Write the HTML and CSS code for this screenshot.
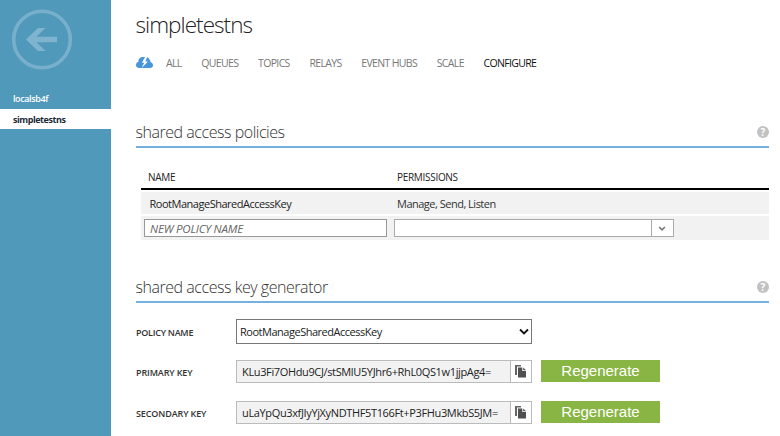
FILE: index.html
```html
<!DOCTYPE html>
<html lang="en">
<head>
<meta charset="utf-8">
<title>simpletestns</title>
<link rel="stylesheet" href="styles.css">
</head>
<body>
<div class="app">
  <aside class="sidebar">
    <svg class="back" width="62" height="62" viewBox="0 0 62 62">
      <circle cx="31" cy="31.5" r="28.3" fill="none" stroke="#78b0cb" stroke-width="3.6"/>
      <path d="M15 31.5 L27 20 H34.5 L25.5 28.8 H46 V34.2 H25.5 L34.5 43 H27 Z" fill="#7fb4ce"/>
    </svg>
    <nav class="namespaces">
      <a class="ns">localsb4f</a>
      <a class="ns current">simpletestns</a>
    </nav>
  </aside>
  <main class="content">
    <h1 class="title">simpletestns</h1>
    <nav class="tabs">
      <svg class="cloud" width="17" height="12" viewBox="0 0 17 12">
        <path d="M3.4 11 C1.2 11 0 9.8 0 8 C0 6.3 1.2 5.2 2.4 5.1 C2.2 2.3 4 0 7 0 H10 C11.5 0 12.8 .8 13.2 2.2 C14.2 3 14.6 4 14.5 5.2 C16 5.5 17 6.6 17 8.2 C17 9.9 15.8 11 14 11 Z" fill="#4796da"/>
        <path d="M9 0 L6 5.7 H8.2 L5.6 11 L12 4.4 H9.4 L11.2 0 Z" fill="#fff"/>
      </svg>
      <a class="tab all">ALL</a>
      <a class="tab">QUEUES</a>
      <a class="tab">TOPICS</a>
      <a class="tab">RELAYS</a>
      <a class="tab">EVENT HUBS</a>
      <a class="tab">SCALE</a>
      <a class="tab active">CONFIGURE</a>
    </nav>

    <section class="policies">
      <header class="section-head">
        <h2>shared access policies</h2>
        <span class="help">?</span>
      </header>
      <div class="table">
        <div class="row head"><span>NAME</span><span class="perm">PERMISSIONS</span></div>
        <div class="row"><span class="name">RootManageSharedAccessKey</span><span class="perm">Manage, Send, Listen</span></div>
        <div class="row entry">
          <div class="new-name">NEW POLICY NAME</div>
          <div class="combo">
            <svg width="22" height="16" viewBox="0 0 22 16"><path d="M7.5 7 L10.5 10 L13.5 7" fill="none" stroke="#777" stroke-width="1.7"/></svg>
          </div>
        </div>
      </div>
    </section>

    <section class="generator">
      <header class="section-head">
        <h2>shared access key generator</h2>
        <span class="help">?</span>
      </header>
      <div class="field select-field">
        <label class="tight">POLICY NAME</label>
        <div class="select">
          <span>RootManageSharedAccessKey</span>
          <svg width="12" height="8" viewBox="0 0 12 8"><path d="M2 1.5 L6 5.5 L10 1.5" fill="none" stroke="#111" stroke-width="1.8"/></svg>
        </div>
      </div>
      <div class="field key-field">
        <label>PRIMARY KEY</label>
        <div class="key">
          <span>KLu3Fi7OHdu9CJ/stSMlU5YJhr6+RhL0QS1w1jjpAg4=</span>
          <div class="copy"><svg width="12" height="13" viewBox="0 0 12 13"><path d="M0 0 H6 V1.5 H2 V10 H0 Z" fill="#666"/><path d="M3 2.5 H7.3 V6 H11 V12.5 H3 Z M8.2 2.5 L11 5.2 H8.2 Z" fill="#505050"/></svg></div>
        </div>
        <div class="button">Regenerate</div>
      </div>
      <div class="field key-field">
        <label>SECONDARY KEY</label>
        <div class="key">
          <span>uLaYpQu3xfJIyYjXyNDTHF5T166Ft+P3FHu3MkbS5JM=</span>
          <div class="copy"><svg width="12" height="13" viewBox="0 0 12 13"><path d="M0 0 H6 V1.5 H2 V10 H0 Z" fill="#666"/><path d="M3 2.5 H7.3 V6 H11 V12.5 H3 Z M8.2 2.5 L11 5.2 H8.2 Z" fill="#505050"/></svg></div>
        </div>
        <div class="button">Regenerate</div>
      </div>
    </section>
  </main>
</div>
</body>
</html>
```
FILE: styles.css
```css
* { box-sizing: border-box; }
body { margin: 0; background: #fff; font-family: "Open Sans", "Noto Sans", sans-serif; font-size: 11px; color: #333; overflow: hidden; }
.app { display: flex; height: 436px; white-space: nowrap; }
.sidebar { width: 111px; flex: none; background: #5099bb; padding-top: 8px; }
.back { display: block; margin-left: 11px; }
.namespaces { margin-top: 18px; }
.ns { display: block; height: 21px; line-height: 22px; padding-left: 13px; font-size: 9px; font-weight: 600; color: #fff; letter-spacing: -0.4px; }
.ns.current { height: 20px; background: #fff; color: #1c2b38; font-weight: 700; letter-spacing: -0.45px; }
.content { flex: 1; padding: 0 11px 0 25px; }
h1, h2 { margin: 0; font-weight: 300; }
.title { height: 50px; line-height: 49px; font-size: 22.5px; letter-spacing: -0.95px; color: #222; margin-left: -0.5px; }
.tabs { display: flex; align-items: center; gap: 19.7px; height: 26px; font-size: 10.5px; color: #777; }
.cloud { margin-top: -1px; }
.tab { letter-spacing: -0.65px; }
.all { margin-left: -6.7px; }
.active { color: #111; }
.section-head { display: flex; justify-content: space-between; align-items: center; height: 30px; border-bottom: 2px solid #76b0e0; }
h2 { font-size: 16px; color: #333; letter-spacing: -0.46px; margin-left: -0.5px; }
.help { width: 12px; height: 12px; border-radius: 50%; background: #c2c2c2; color: #fff; font-size: 10px; font-weight: 700; line-height: 12px; text-align: center; }
.policies { margin-top: 42px; }
.table { padding-left: 5px; margin-top: 17px; }
.row { display: grid; grid-template-columns: 253px 1fr; align-items: center; height: 22px; margin-bottom: 2px; padding-left: 3px; background: #f2f2f2; }
.row.head { height: 25px; background: #fff; border-bottom: 2px solid #000; font-size: 10px; color: #222; padding-left: 7px; grid-template-columns: 249px 1fr; letter-spacing: -0.3px; }
.name { padding-left: 5.5px; color: #222; letter-spacing: -0.48px; }
.row .perm { letter-spacing: -0.5px; }
.row.head .perm { letter-spacing: -0.3px; }
.row.entry { height: 24px; grid-template-columns: 243px 280px; gap: 7px; }
.new-name { height: 18px; border: 1px solid #999; background: #fff; padding-left: 5px; line-height: 17px; font-size: 11.5px; font-style: italic; color: #666; letter-spacing: -0.2px; }
.combo { display: flex; justify-content: flex-end; height: 18px; border: 1px solid #aaa; background: #fff; }
.combo svg { border-left: 1px solid #aaa; }
.generator { margin-top: 33px; }
.field { display: grid; grid-template-columns: 100px 296px 128px; align-items: center; }
.field label { padding-top: 2px; font-size: 9px; font-weight: 600; letter-spacing: -0.12px; }
.field label.tight { letter-spacing: -0.25px; }
.select-field { margin-top: 16px; height: 25px; }
.select { display: flex; align-items: center; justify-content: space-between; height: 25px; border: 1px solid #777; padding: 0 1px 0 3px; color: #222; }
.select span { letter-spacing: -0.48px; }
.key-field { height: 23px; margin-top: 16px; }
.key-field + .key-field { margin-top: 18px; }
.key { display: flex; height: 23px; border: 1px solid #bbb; background: #f2f2f2; justify-content: space-between; line-height: 22px; color: #222; }
.key span { padding-left: 5px; letter-spacing: -0.36px; }
.copy { width: 21px; flex: none; border-left: 1px solid #bbb; background: #fff; display: flex; align-items: center; justify-content: center; }
.button { align-self: start; margin-left: 9px; width: 119px; height: 22px; background: #89b544; color: #fff; font: 15px/21px "Liberation Sans", Arial, sans-serif; text-align: center; }
```
